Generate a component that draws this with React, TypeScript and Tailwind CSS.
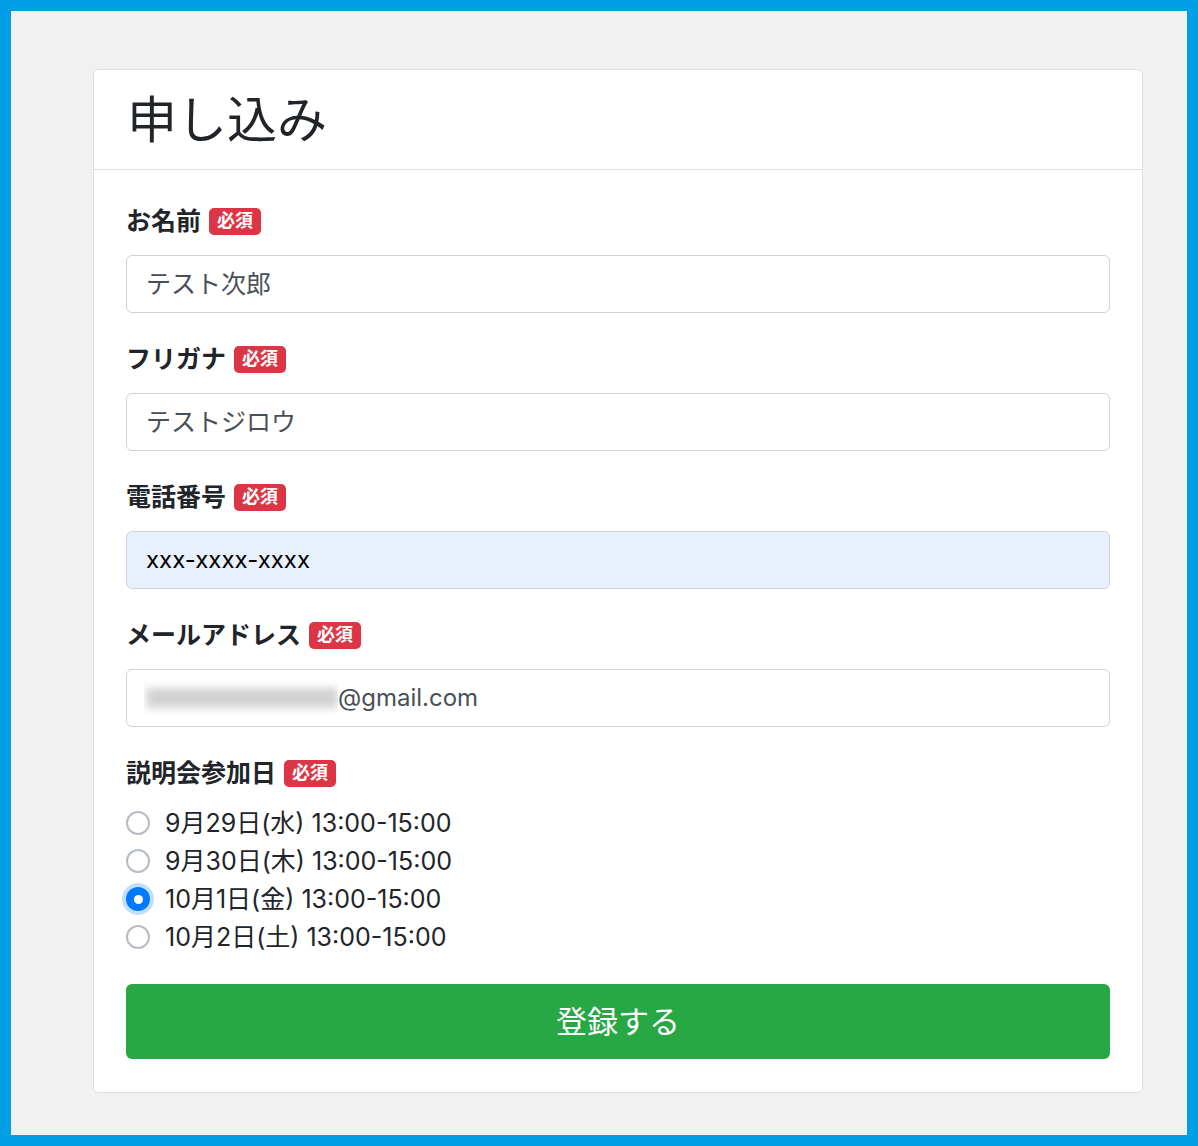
import React from "react";

const font = { fontFamily: 'Inter, "Noto Sans CJK JP", sans-serif' };

function Badge() {
  return (
    <span className="ml-[8px] inline-flex h-[27px] items-center rounded-[5px] bg-[#dc3545] px-[8px] text-[18px] font-bold leading-none text-white">
      必須
    </span>
  );
}

function Label({ text }: { text: string }) {
  return (
    <div className="flex h-[30px] items-center text-[25px] font-bold leading-none text-[#212529]">
      <span>{text}</span>
      <Badge />
    </div>
  );
}

function Field({
  label,
  children,
  bg = "bg-white",
}: {
  label: string;
  children: React.ReactNode;
  bg?: string;
}) {
  return (
    <div className="mb-[31px]">
      <Label text={label} />
      <div
        className={`mt-[19px] flex h-[58px] items-center rounded-[6px] border border-[#ced4da] px-[19px] text-[24px] leading-none ${bg}`}
      >
        {children}
      </div>
    </div>
  );
}

function Radio({ text, checked }: { text: string; checked?: boolean }) {
  return (
    <div className="flex h-[38px] items-center text-[25px] leading-none text-[#212529]">
      {checked ? (
        <span className="flex h-[24px] w-[24px] items-center justify-center rounded-full bg-[#007bff] shadow-[0_0_0_4px_#c4defd]">
          <span className="h-[9px] w-[9px] rounded-full bg-white" />
        </span>
      ) : (
        <span className="box-border h-[24px] w-[24px] rounded-full border-2 border-[#b6bcc2] bg-white" />
      )}
      <span className="ml-[15px]">{text}</span>
    </div>
  );
}

export default function App() {
  return (
    <div
      className="box-border h-[1146px] w-[1198px] border-[11px] border-[#009fe6] bg-[#f1f1f1] pl-[82px] pt-[58px]"
      style={font}
    >
      <div className="w-[1050px] rounded-[6px] border border-[#dfdfdf] bg-white">
        <div className="flex h-[100px] items-center border-b border-[#dfdfdf] px-[33px] text-[50px] font-normal leading-none text-[#212529]">
          申し込み
        </div>
        <div className="px-[32px] pb-[33px] pt-[36px]">
          <Field label="お名前">
            <span className="text-[25px] text-[#495057]">テスト次郎</span>
          </Field>
          <Field label="フリガナ">
            <span className="text-[25px] text-[#495057]">テストジロウ</span>
          </Field>
          <Field label="電話番号" bg="bg-[#e8f0fe]">
            <span className="text-black">xxx-xxxx-xxxx</span>
          </Field>
          <Field label="メールアドレス">
            <span className="relative -ml-[2px] inline-block h-[34px] w-[194px] overflow-hidden">
              <span className="absolute left-[2px] right-[0px] top-[7px] h-[20px] bg-[#d2d2d2] blur-[4px]" />
            </span>
            <span className="text-[#495057]">@gmail.com</span>
          </Field>
          <div>
            <Label text="説明会参加日" />
            <div className="mt-[16px]">
              <Radio text="9月29日(水) 13:00-15:00" />
              <Radio text="9月30日(木) 13:00-15:00" />
              <Radio text="10月1日(金) 13:00-15:00" checked />
              <Radio text="10月2日(土) 13:00-15:00" />
            </div>
          </div>
          <button className="mt-[28px] flex h-[75px] w-full items-center justify-center rounded-[6px] bg-[#28a745] text-[31px] leading-none text-white">
            登録する
          </button>
        </div>
      </div>
    </div>
  );
}
